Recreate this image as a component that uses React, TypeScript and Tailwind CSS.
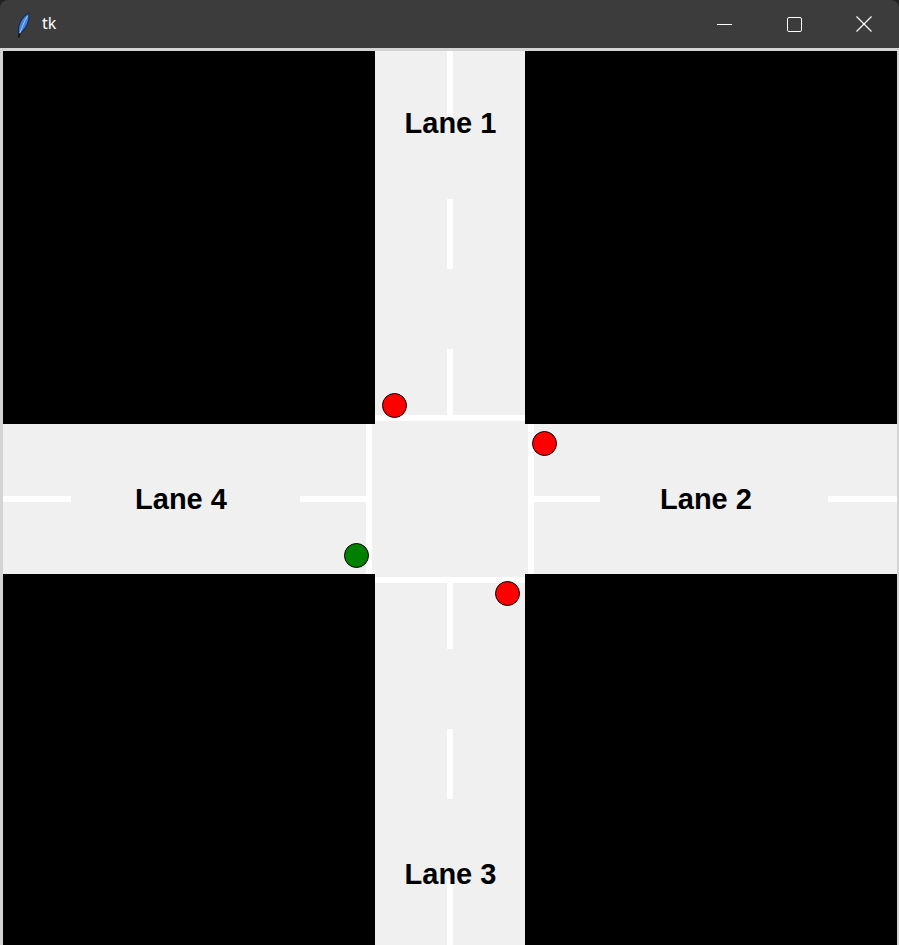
const font = { fontFamily: '"Liberation Sans", Arial, sans-serif' };

const vDashes = [0, 148, 298, 528, 678, 828];
const hDashes = [
  { left: 0, w: 68 },
  { left: 297, w: 70 },
  { left: 527, w: 70 },
  { left: 825, w: 72 },
];

const lights = [
  { x: 391, y: 354, color: 'bg-[#ff0000]' },
  { x: 541, y: 392, color: 'bg-[#ff0000]' },
  { x: 353, y: 504, color: 'bg-[#008000]' },
  { x: 504, y: 542, color: 'bg-[#ff0000]' },
];

function Feather() {
  return (
    <svg width="16" height="26" viewBox="0 0 16 26">
      <path d="M4 22 C2 15 6 5 14 1 C15 9 11 17 5 22 Z" fill="#3f82e0" stroke="#1b2c4c" strokeWidth="1.2" />
      <path d="M12.5 4 C9 10 7 15 5 21" stroke="#a9cbff" strokeWidth="1" fill="none" />
      <path d="M4.5 22 L3.5 25.5" stroke="#111" strokeWidth="1.6" />
    </svg>
  );
}

function TitleBar() {
  return (
    <div className="flex h-[48px] items-center rounded-t-[8px] bg-[#3c3c3c]">
      <div className="ml-[15px] mt-[1px]">
        <Feather />
      </div>
      <span className="ml-[11px] mb-[2px] text-[16px] text-white" style={{ fontFamily: '"Noto Sans", sans-serif' }}>
        tk
      </span>
      <div className="flex-1" />
      <div className="flex h-full w-[70px] items-center justify-center">
        <div className="h-px w-[15px] bg-white" />
      </div>
      <div className="flex h-full w-[70px] items-center justify-center">
        <div className="h-[15px] w-[15px] rounded-[2px] border border-white" />
      </div>
      <div className="flex h-full w-[70px] items-center justify-center">
        <svg width="16" height="16" viewBox="0 0 16 16">
          <path d="M0.5 0.5 L15.5 15.5 M15.5 0.5 L0.5 15.5" stroke="white" strokeWidth="1.2" />
        </svg>
      </div>
    </div>
  );
}

function Label({ x, y, text }: { x: number; y: number; text: string }) {
  return (
    <span
      className="absolute -translate-x-1/2 -translate-y-1/2 whitespace-nowrap text-[29px] font-bold leading-none text-black"
      style={{ ...font, left: x, top: y }}
    >
      {text}
    </span>
  );
}

function Intersection() {
  return (
    <div className="relative h-[894px] w-[894px] overflow-hidden bg-[#f0f0f0]">
      <div className="grid grid-cols-[372px_150px_372px] grid-rows-[373px_150px_371px]">
        <div className="bg-black" />
        <div />
        <div className="bg-black" />
        <div />
        <div />
        <div />
        <div className="bg-black" />
        <div />
        <div className="bg-black" />
      </div>

      {vDashes.map((t) => (
        <div key={t} className="absolute left-[444px] h-[70px] w-[6px] bg-white" style={{ top: t }} />
      ))}
      {hDashes.map((d) => (
        <div key={d.left} className="absolute top-[445px] h-[6px] bg-white" style={{ left: d.left, width: d.w }} />
      ))}

      {/* stop lines */}
      <div className="absolute left-[372px] top-[364px] h-[6px] w-[150px] bg-white" />
      <div className="absolute left-[372px] top-[526px] h-[6px] w-[150px] bg-white" />
      <div className="absolute left-[363px] top-[373px] h-[150px] w-[6px] bg-white" />
      <div className="absolute left-[525px] top-[373px] h-[150px] w-[6px] bg-white" />

      <Label x={447.5} y={72} text="Lane 1" />
      <Label x={703} y={447.5} text="Lane 2" />
      <Label x={447.5} y={822.5} text="Lane 3" />
      <Label x={178} y={447.5} text="Lane 4" />

      {lights.map((l, i) => (
        <div
          key={i}
          className={`absolute h-[25px] w-[25px] rounded-full border border-black ${l.color}`}
          style={{ left: l.x - 12.5, top: l.y - 12.5 }}
        />
      ))}
    </div>
  );
}

export default function App() {
  return (
    <div className="h-[945px] w-[899px] overflow-hidden bg-[#202020]">
      <TitleBar />
      <div className="border-l-[3px] border-r-[2px] border-t-[3px] border-[#d4d4d4] bg-[#f0f0f0]">
        <Intersection />
      </div>
    </div>
  );
}
